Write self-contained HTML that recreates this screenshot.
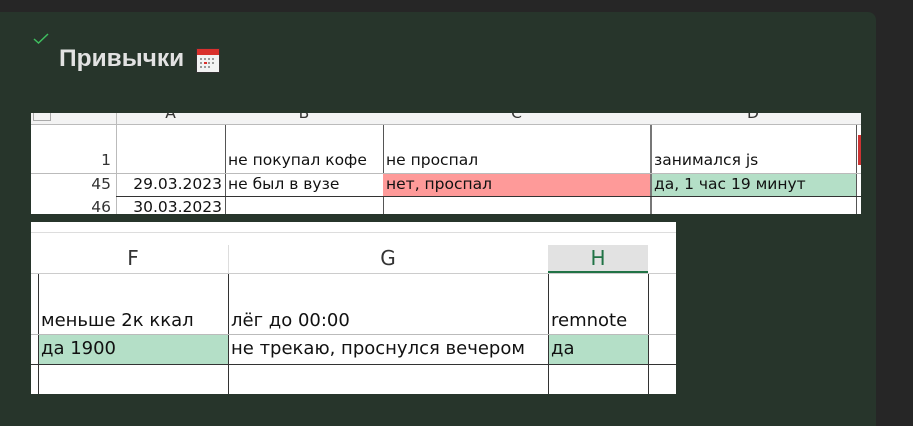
<!DOCTYPE html>
<html><head><meta charset="utf-8"><style>
body{margin:0;width:913px;height:426px;background:#262626;position:relative;overflow:hidden;font-family:"Liberation Sans","DejaVu Sans",sans-serif}
.card{position:absolute;left:0;top:12px;width:876px;height:414px;background:#27352b;border-top-right-radius:8px}
.t{position:absolute;left:59px;top:45px;color:#e2e2e2;font-weight:bold;font-size:24.5px}
.s{position:absolute;background:#fff;overflow:hidden;font-family:"DejaVu Sans",sans-serif;color:#111}
.c{position:absolute;box-sizing:border-box;white-space:nowrap;overflow:hidden}
</style></head><body>
<div class="card"></div>
<svg style="position:absolute;left:33px;top:33px" width="16" height="12"><path d="M1 6 L5.5 10 L15 1" stroke="#3fbf5f" stroke-width="1.5" fill="none"/></svg>
<div class="t">Привычки</div>
<svg style="position:absolute;left:196px;top:48px" width="24" height="25"><rect x="0.5" y="0.5" width="23" height="24" fill="#f2f2f2" stroke="#333"/><rect x="1" y="1" width="22" height="6" fill="#d9302c"/><g fill="#999"><rect x="4" y="10" width="2" height="2"/><rect x="8" y="10" width="2" height="2"/><rect x="12" y="10" width="2" height="2"/><rect x="16" y="10" width="2" height="2"/><rect x="4" y="14" width="2" height="2"/><rect x="12" y="14" width="2" height="2"/><rect x="16" y="14" width="2" height="2"/><rect x="4" y="18" width="2" height="2"/><rect x="8" y="18" width="2" height="2"/><rect x="12" y="18" width="2" height="2"/></g><rect x="8" y="14" width="3" height="2" fill="#d9302c"/></svg>

<div class="s" style="left:31px;top:113px;width:830px;height:101px;font-size:15.5px">
<div class="c" style="left:0;top:0;width:830px;height:12px;background:#f3f3f3;border-bottom:1px solid #bbb"></div>
<div class="c" style="left:2px;top:-3px;width:18px;height:11px;border:1px solid #aaa"></div>
<div class="c" style="left:85px;top:-9px;width:109px;text-align:center;color:#333">A</div>
<div class="c" style="left:194px;top:-9px;width:158px;text-align:center;color:#333">B</div>
<div class="c" style="left:352px;top:-9px;width:267px;text-align:center;color:#333">C</div>
<div class="c" style="left:619px;top:-9px;width:206px;text-align:center;color:#333">D</div>
<div class="c" style="left:85px;top:0;width:1px;height:101px;background:#bbb"></div>
<div class="c" style="left:194px;top:12px;width:1px;height:89px;background:#555"></div>
<div class="c" style="left:352px;top:12px;width:1px;height:89px;background:#555"></div>
<div class="c" style="left:619px;top:12px;width:2px;height:89px;background:#777"></div>
<div class="c" style="left:825px;top:12px;width:1px;height:89px;background:#555"></div>
<div class="c" style="left:827px;top:22px;width:3px;height:30px;background:#c33"></div>
<div class="c" style="left:0;top:60px;width:830px;height:1px;background:#bbb"></div>
<div class="c" style="left:85px;top:83px;width:745px;height:1px;background:#333"></div>
<div class="c" style="left:352px;top:61px;width:267px;height:22px;background:#fe9a99"></div>
<div class="c" style="left:621px;top:61px;width:204px;height:22px;background:#b4dfc7"></div>
<div class="c" style="left:0;top:38px;width:80px;text-align:right;color:#333">1</div>
<div class="c" style="left:0;top:62px;width:80px;text-align:right;color:#333">45</div>
<div class="c" style="left:0;top:85px;width:80px;text-align:right;color:#333">46</div>
<div class="c" style="left:85px;top:62px;width:106px;text-align:right">29.03.2023</div>
<div class="c" style="left:85px;top:85px;width:106px;text-align:right">30.03.2023</div>
<div class="c" style="left:197px;top:38px;width:155px">не покупал кофе</div>
<div class="c" style="left:197px;top:62px">не был в вузе</div>
<div class="c" style="left:355px;top:38px">не проспал</div>
<div class="c" style="left:355px;top:62px">нет, проспал</div>
<div class="c" style="left:623px;top:38px">занимался js</div>
<div class="c" style="left:623px;top:62px">да, 1 час 19 минут</div>
</div>

<div class="s" style="left:31px;top:222px;width:645px;height:172px;font-size:18px">
<div class="c" style="left:0;top:10px;width:645px;height:1px;background:#ddd"></div>
<div class="c" style="left:0;top:51px;width:645px;height:1px;background:#ccc"></div>
<div class="c" style="left:517px;top:23px;width:100px;height:28px;background:#e2e2e2;border-bottom:2px solid #217346"></div>
<div class="c" style="left:7px;top:112px;width:190px;height:30px;background:#b4dfc7"></div>
<div class="c" style="left:517px;top:112px;width:100px;height:30px;background:#b4dfc7"></div>
<div class="c" style="left:7px;top:52px;width:1px;height:120px;background:#333"></div>
<div class="c" style="left:197px;top:52px;width:1px;height:120px;background:#333"></div>
<div class="c" style="left:517px;top:52px;width:1px;height:120px;background:#333"></div>
<div class="c" style="left:617px;top:52px;width:1px;height:120px;background:#333"></div>
<div class="c" style="left:197px;top:23px;width:1px;height:28px;background:#ddd"></div>
<div class="c" style="left:0;top:112px;width:645px;height:1px;background:#bbb"></div>
<div class="c" style="left:0;top:142px;width:645px;height:1px;background:#333"></div>
<div class="c" style="left:7px;top:24px;width:190px;text-align:center;color:#333;font-size:20px">F</div>
<div class="c" style="left:197px;top:24px;width:320px;text-align:center;color:#333;font-size:20px">G</div>
<div class="c" style="left:517px;top:24px;width:100px;text-align:center;color:#217346;font-size:20px">H</div>
<div class="c" style="left:10px;top:88px">меньше 2к ккал</div>
<div class="c" style="left:200px;top:88px">лёг до 00:00</div>
<div class="c" style="left:520px;top:88px;width:97px">remnote</div>
<div class="c" style="left:10px;top:116px">да 1900</div>
<div class="c" style="left:200px;top:116px;width:317px">не трекаю, проснулся вечером</div>
<div class="c" style="left:520px;top:116px">да</div>
</div>
</body></html>
